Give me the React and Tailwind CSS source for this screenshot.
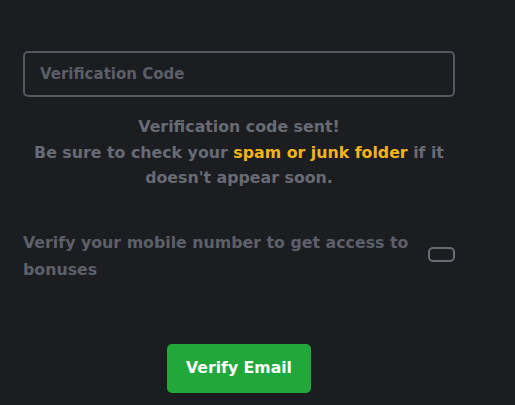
export default function App() {
  return (
    <div
      className="w-[515px] h-[405px] bg-[#1c1d21] overflow-hidden"
      style={{ fontFamily: '"DejaVu Sans", sans-serif' }}
    >
      <div className="w-[432px] ml-[23px] pt-[51px] flex flex-col">
        {/* code input */}
        <input
          type="text"
          placeholder="Verification Code"
          className="w-full h-[46px] rounded-[5px] border-2 border-[#56585f] bg-transparent px-[15px] text-[15px] font-bold text-[#c9cad0] placeholder:text-[#5b5e68] outline-none"
        />

        <p className="mt-[17px] text-center text-[15.8px] font-bold leading-[25.5px] text-[#686b75]">
          Verification code sent!
          <br />
          Be sure to check your{" "}
          <span className="text-[#f2b41c]">spam or junk folder</span> if it
          <br />
          doesn't appear soon.
        </p>

        {/* mobile bonus toggle */}
        <div className="mt-[38px] flex items-center justify-between">
          <p className="w-[400px] text-[15.8px] font-bold leading-[27px] text-[#5d606a]">
            Verify your mobile number to get access to
            <br />
            bonuses
          </p>
          <span className="w-[27px] h-[15px] mb-[3px] rounded-[5px] border-2 border-[#6a6c73]" />
        </div>

        <div className="mt-[61px] flex justify-center">
          <button className="w-[144px] h-[49px] rounded-[5px] bg-[#22a83a] text-white text-[15.7px] font-bold">
            Verify Email
          </button>
        </div>
      </div>
    </div>
  );
}
